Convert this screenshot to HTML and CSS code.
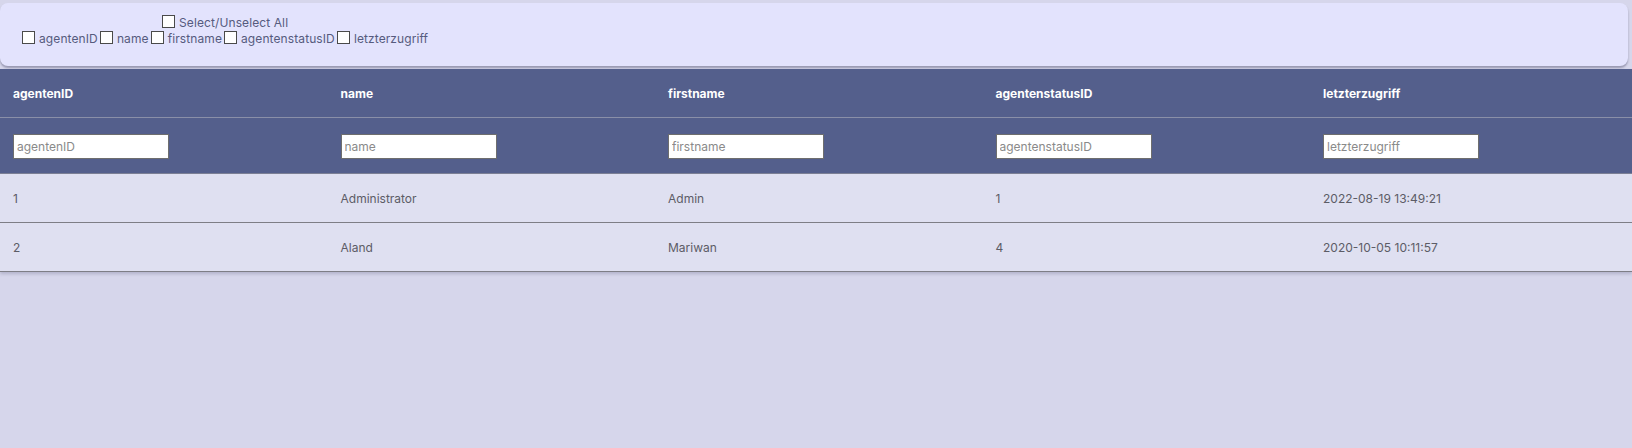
FILE: index.html
```html
<!DOCTYPE html>
<html>
<head>
<meta charset="utf-8">
<link rel="stylesheet" href="styles.css">
</head>
<body>
<div class="panel">
  <div class="chooser">
    <div class="line"><label class="opt"><span class="box"></span>Select/Unselect All</label></div>
    <div class="line">
      <label class="opt"><span class="box"></span>agentenID</label>
      <label class="opt"><span class="box"></span>name</label>
      <label class="opt"><span class="box"></span>firstname</label>
      <label class="opt"><span class="box"></span>agentenstatusID</label>
      <label class="opt"><span class="box"></span>letzterzugriff</label>
    </div>
  </div>
</div>
<div class="table">
  <div class="head">
    <div class="row titles">
      <div class="cell">agentenID</div>
      <div class="cell">name</div>
      <div class="cell">firstname</div>
      <div class="cell">agentenstatusID</div>
      <div class="cell">letzterzugriff</div>
    </div>
    <div class="row filters">
      <div class="cell"><input class="filter" placeholder="agentenID"></div>
      <div class="cell"><input class="filter" placeholder="name"></div>
      <div class="cell"><input class="filter" placeholder="firstname"></div>
      <div class="cell"><input class="filter" placeholder="agentenstatusID"></div>
      <div class="cell"><input class="filter" placeholder="letzterzugriff"></div>
    </div>
  </div>
  <div class="row data">
    <div class="cell">1</div>
    <div class="cell">Administrator</div>
    <div class="cell">Admin</div>
    <div class="cell">1</div>
    <div class="cell">2022-08-19 13:49:21</div>
  </div>
  <div class="row data">
    <div class="cell">2</div>
    <div class="cell">Aland</div>
    <div class="cell">Mariwan</div>
    <div class="cell">4</div>
    <div class="cell">2020-10-05 10:11:57</div>
  </div>
</div>
</body>
</html>
```
FILE: styles.css
```css
html, body {
  margin: 0;
  padding: 0;
}
body {
  background: #d6d6eb;
  font-family: Inter, "Liberation Sans", sans-serif;
  padding-top: 3px;
  height: 445px;
  overflow: hidden;
}
.panel {
  width: 1628px;
  height: 63px;
  box-sizing: border-box;
  background: #e3e3fd;
  border-radius: 8px;
  box-shadow: 0 2px 2px rgba(80, 80, 110, 0.45);
  padding: 11px 0 0 22px;
}
.chooser {
  display: inline-block;
  text-align: center;
}
.line {
  display: flex;
  justify-content: center;
  height: 16px;
}
.opt {
  display: inline-flex;
  align-items: center;
  font-size: 12px;
  letter-spacing: 0.1px;
  color: #565b7e;
  margin-right: 2px;
}
.box {
  width: 11px;
  height: 11px;
  border: 1px solid #4a4a4a;
  background: #ffffff;
  margin-right: 4px;
  margin-top: -2px;
}
.table {
  margin-top: 3px;
  box-shadow: 0 2px 3px rgba(80, 80, 110, 0.25);
}
.head {
  background: #545f8c;
}
.row {
  display: grid;
  grid-template-columns: repeat(5, 327.5px);
}
.cell {
  padding-left: 13px;
}
.titles {
  height: 48px;
  align-items: center;
  border-bottom: 1px solid #8a8fa8;
  color: #ffffff;
  font-weight: 700;
  font-size: 12px;
}
.filters {
  height: 55px;
  align-items: center;
  border-bottom: 1px solid #7b7f95;
}
.filter {
  width: 156px;
  height: 25px;
  box-sizing: border-box;
  border: 1px solid #6e6e6e;
  padding: 0 3px;
  font-family: Inter, "Liberation Sans", sans-serif;
  font-size: 12px;
  margin-top: 1px;
  outline: none;
}
.filter::placeholder {
  color: #8a8a8a;
}
.data {
  height: 48px;
  align-items: center;
  background: #dfe0f1;
  border-bottom: 1px solid #7e7e86;
  color: #5c5c66;
  font-size: 12px;
}
```
